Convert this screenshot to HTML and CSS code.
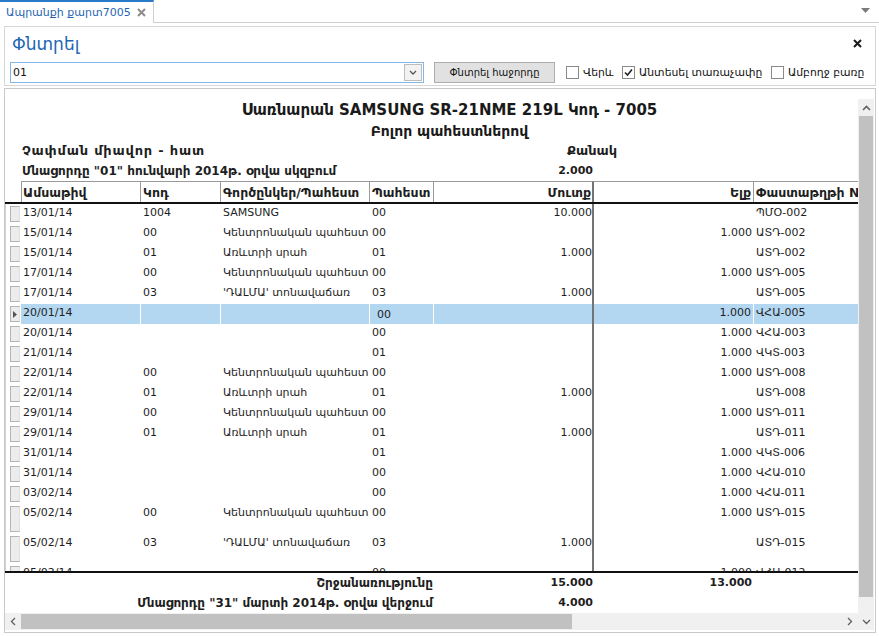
FILE: index.html
```html
<!DOCTYPE html>
<html lang="hy">
<head>
<meta charset="utf-8">
<title>Ապրանքի քարտ7005</title>
<link rel="stylesheet" href="styles.css">
</head>
<body>
<div class="app">
  <div class="tabstrip">
    <div class="tab">
      <span class="tab-title">Ապրանքի քարտ7005</span>
      <svg class="tab-close" width="9" height="9" viewBox="0 0 9 9"><path d="M1 1L8 8M8 1L1 8" stroke="#8c8c8c" stroke-width="2"/></svg>
    </div>
    <div class="tab-fill">
      <svg width="9" height="6" viewBox="0 0 9 6"><path d="M0 0H9L4.5 5Z" fill="#7a7a7a"/></svg>
    </div>
  </div>

  <div class="find">
    <div class="find-head">
      <span class="find-title">Փնտրել</span>
      <svg width="9" height="9" viewBox="0 0 9 9"><path d="M1 1L8 8M8 1L1 8" stroke="#1a1a1a" stroke-width="2"/></svg>
    </div>
    <div class="find-row">
      <div class="combo">
        <span class="combo-text">01</span>
        <span class="combo-btn"><svg width="8" height="5" viewBox="0 0 8 5"><path d="M1 1L4 4L7 1" fill="none" stroke="#555" stroke-width="1.3"/></svg></span>
      </div>
      <div class="btn">Փնտրել հաջորդը</div>
      <div class="chk chk1"><span class="box"></span><span>Վերև</span></div>
      <div class="chk chk2"><span class="box"><svg width="11" height="11" viewBox="0 0 11 11"><path d="M2 5.5L4.5 8L9 2.5" fill="none" stroke="#222" stroke-width="1.6"/></svg></span><span>Անտեսել տառաչափը</span></div>
      <div class="chk"><span class="box"></span><span>Ամբողջ բառը</span></div>
    </div>
  </div>

  <div class="report">
    <div class="main">
      <div class="sheet">
        <div class="t1">Սառնարան SAMSUNG SR-21NME 219L Կոդ - 7005</div>
        <div class="t2">Բոլոր պահեստներով</div>
        <div class="info cols">
          <div class="lbl big">Չափման միավոր - հատ</div>
          <div class="qty">Քանակ</div>
        </div>
        <div class="info cols">
          <div class="lbl">Մնացորդը "01" հունվարի 2014թ. օրվա սկզբում</div>
          <div class="inum">2.000</div>
        </div>
        <div class="head cols">
          <div class="hrh"></div>
          <div class="h first">Ամսաթիվ</div>
          <div class="h">Կոդ</div>
          <div class="h">Գործընկեր/Պահեստ</div>
          <div class="h">Պահեստ</div>
          <div class="h num in">Մուտք</div>
          <div class="h num">Ելք</div>
          <div class="h">Փաստաթղթի N</div>
        </div>
        <div class="body">
          <div class="row cols"><div class="rh"><span class="rb"></span></div><div class="c">13/01/14</div><div class="c">1004</div><div class="c">SAMSUNG</div><div class="c">00</div><div class="c num in">10.000</div><div class="c num"></div><div class="c doc">ՊՄՕ-002</div></div>
          <div class="row cols"><div class="rh"><span class="rb"></span></div><div class="c">15/01/14</div><div class="c">00</div><div class="c">Կենտրոնական պահեստ</div><div class="c">00</div><div class="c num in"></div><div class="c num">1.000</div><div class="c doc">ԱՏԴ-002</div></div>
          <div class="row cols"><div class="rh"><span class="rb"></span></div><div class="c">15/01/14</div><div class="c">01</div><div class="c">Առևտրի սրահ</div><div class="c">01</div><div class="c num in">1.000</div><div class="c num"></div><div class="c doc">ԱՏԴ-002</div></div>
          <div class="row cols"><div class="rh"><span class="rb"></span></div><div class="c">17/01/14</div><div class="c">00</div><div class="c">Կենտրոնական պահեստ</div><div class="c">00</div><div class="c num in"></div><div class="c num">1.000</div><div class="c doc">ԱՏԴ-005</div></div>
          <div class="row cols"><div class="rh"><span class="rb"></span></div><div class="c">17/01/14</div><div class="c">03</div><div class="c">'ԴԱԼՄԱ' տոնավաճառ</div><div class="c">03</div><div class="c num in">1.000</div><div class="c num"></div><div class="c doc">ԱՏԴ-005</div></div>
          <div class="row cols sel"><div class="rh"><span class="rb"><svg width="5" height="7" viewBox="0 0 5 7"><path d="M0 0L4 3.5L0 7Z" fill="#555"/></svg></span></div><div class="c">20/01/14</div><div class="c"></div><div class="c"></div><div class="c edit">00</div><div class="c num in"></div><div class="c num">1.000</div><div class="c doc">ՎՀԱ-005</div></div>
          <div class="row cols"><div class="rh"><span class="rb"></span></div><div class="c">20/01/14</div><div class="c"></div><div class="c"></div><div class="c">00</div><div class="c num in"></div><div class="c num">1.000</div><div class="c doc">ՎՀԱ-003</div></div>
          <div class="row cols"><div class="rh"><span class="rb"></span></div><div class="c">21/01/14</div><div class="c"></div><div class="c"></div><div class="c">01</div><div class="c num in"></div><div class="c num">1.000</div><div class="c doc">ՎԿՏ-003</div></div>
          <div class="row cols"><div class="rh"><span class="rb"></span></div><div class="c">22/01/14</div><div class="c">00</div><div class="c">Կենտրոնական պահեստ</div><div class="c">00</div><div class="c num in"></div><div class="c num">1.000</div><div class="c doc">ԱՏԴ-008</div></div>
          <div class="row cols"><div class="rh"><span class="rb"></span></div><div class="c">22/01/14</div><div class="c">01</div><div class="c">Առևտրի սրահ</div><div class="c">01</div><div class="c num in">1.000</div><div class="c num"></div><div class="c doc">ԱՏԴ-008</div></div>
          <div class="row cols"><div class="rh"><span class="rb"></span></div><div class="c">29/01/14</div><div class="c">00</div><div class="c">Կենտրոնական պահեստ</div><div class="c">00</div><div class="c num in"></div><div class="c num">1.000</div><div class="c doc">ԱՏԴ-011</div></div>
          <div class="row cols"><div class="rh"><span class="rb"></span></div><div class="c">29/01/14</div><div class="c">01</div><div class="c">Առևտրի սրահ</div><div class="c">01</div><div class="c num in">1.000</div><div class="c num"></div><div class="c doc">ԱՏԴ-011</div></div>
          <div class="row cols"><div class="rh"><span class="rb"></span></div><div class="c">31/01/14</div><div class="c"></div><div class="c"></div><div class="c">01</div><div class="c num in"></div><div class="c num">1.000</div><div class="c doc">ՎԿՏ-006</div></div>
          <div class="row cols"><div class="rh"><span class="rb"></span></div><div class="c">31/01/14</div><div class="c"></div><div class="c"></div><div class="c">00</div><div class="c num in"></div><div class="c num">1.000</div><div class="c doc">ՎՀԱ-010</div></div>
          <div class="row cols"><div class="rh"><span class="rb"></span></div><div class="c">03/02/14</div><div class="c"></div><div class="c"></div><div class="c">00</div><div class="c num in"></div><div class="c num">1.000</div><div class="c doc">ՎՀԱ-011</div></div>
          <div class="row tall cols"><div class="rh"><span class="rb"></span></div><div class="c">05/02/14</div><div class="c">00</div><div class="c">Կենտրոնական պահեստ</div><div class="c">00</div><div class="c num in"></div><div class="c num">1.000</div><div class="c doc">ԱՏԴ-015</div></div>
          <div class="row tall cols"><div class="rh"><span class="rb"></span></div><div class="c">05/02/14</div><div class="c">03</div><div class="c">'ԴԱԼՄԱ' տոնավաճառ</div><div class="c">03</div><div class="c num in">1.000</div><div class="c num"></div><div class="c doc">ԱՏԴ-015</div></div>
          <div class="row cols"><div class="rh"><span class="rb"></span></div><div class="c">05/02/14</div><div class="c"></div><div class="c"></div><div class="c">00</div><div class="c num in"></div><div class="c num">1.000</div><div class="c doc">ՎՀԱ-012</div></div>
        </div>
        <div class="foot">
          <div class="frow cols">
            <div class="flbl">Շրջանառությունը</div>
            <div class="fin">15.000</div>
            <div class="fout">13.000</div>
          </div>
          <div class="frow cols">
            <div class="flbl">Մնացորդը "31" մարտի 2014թ. օրվա վերջում</div>
            <div class="fin">4.000</div>
          </div>
        </div>
      </div>
    </div>

    <div class="vscroll">
      <div class="sbtn"><svg width="9" height="6" viewBox="0 0 9 6"><path d="M1 5L4.5 1.5L8 5" fill="none" stroke="#606060" stroke-width="1.6"/></svg></div>
      <div class="vtrack"><div class="vthumb"></div></div>
      <div class="sbtn"><svg width="9" height="6" viewBox="0 0 9 6"><path d="M1 1L4.5 4.5L8 1" fill="none" stroke="#606060" stroke-width="1.3"/></svg></div>
    </div>

    <div class="hscroll">
      <div class="hbtn"><svg width="6" height="9" viewBox="0 0 6 9"><path d="M5 1L1.5 4.5L5 8" fill="none" stroke="#606060" stroke-width="1.3"/></svg></div>
      <div class="htrack"><div class="hthumb"></div></div>
      <div class="hbtn"><svg width="6" height="9" viewBox="0 0 6 9"><path d="M1 1L4.5 4.5L1 8" fill="none" stroke="#606060" stroke-width="1.3"/></svg></div>
    </div>
  </div>
</div>
</body>
</html>
```

FILE: styles.css
```css
* { box-sizing: border-box; }
html, body { margin: 0; padding: 0; }
body {
  width: 879px;
  height: 636px;
  overflow: hidden;
  background: #fff;
  font-family: "DejaVu Sans", "Liberation Sans", sans-serif;
  color: #1e1e1e;
}
.app { display: flex; flex-direction: column; height: 636px; }

/* tab strip */
.tabstrip { display: flex; height: 23px; }
.tab {
  width: 154px;
  display: flex;
  align-items: center;
  justify-content: space-between;
  padding: 0 7px 0 6px;
  border-top: 2px solid #2b79c9;
  border-right: 1px solid #cfcfcf;
}
.tab-title { font-size: 11px; color: #1f65b1; }
.tab-close { margin-top: 1px; }
.tab-fill {
  flex: 1;
  display: flex;
  justify-content: flex-end;
  align-items: center;
  padding-right: 9px;
  border-bottom: 1px solid #cfcfcf;
}

/* find panel */
.find {
  margin: 3px 3px 0 4px;
  height: 61px;
  border: 1px solid #d6d6d6;
  padding: 0 13px 0 5px;
  display: flex;
  flex-direction: column;
}
.find-head {
  height: 34px;
  display: flex;
  align-items: center;
  justify-content: space-between;
  padding-left: 2px;
}
.find-title { font-size: 17px; color: #1d67b4; }
.find-row { display: flex; align-items: flex-start; padding-top: 1px; }
.combo {
  flex: none;
  width: 414px;
  height: 21px;
  border: 1px solid #85b7e6;
  display: flex;
  align-items: center;
  justify-content: space-between;
  padding: 0 1px 0 2px;
}
.combo-text { font-size: 11px; color: #111; }
.combo-btn {
  width: 18px;
  height: 17px;
  border: 1px solid #bdbdbd;
  background: #f2f2f2;
  display: flex;
  align-items: center;
  justify-content: center;
}
.btn {
  flex: none;
  margin-left: 10px;
  width: 121px;
  height: 21px;
  background: #e1e1e1;
  border: 1px solid #adadad;
  font-size: 10px;
  display: flex;
  align-items: center;
  justify-content: center;
  color: #111;
}
.chk {
  flex: none;
  display: flex;
  align-items: center;
  gap: 4px;
  height: 21px;
  font-size: 10.8px;
  color: #111;
  white-space: nowrap;
}
.chk1 { margin-left: 11px; width: 56px; }
.chk2 { width: 149px; }
.box {
  flex: none;
  width: 13px;
  height: 13px;
  border: 1px solid #8a8a8a;
  background: #fff;
  display: flex;
  align-items: center;
  justify-content: center;
}

/* report frame */
.report {
  margin: 2px 3px 3px 4px;
  flex: 1;
  border: 1px solid #c9c9c9;
  padding: 10px 1px 2px 0;
  display: grid;
  grid-template-columns: 1fr 16px;
  grid-template-rows: 1fr 17px;
}
.main { overflow: hidden; }
.sheet { width: 889px; display: flex; flex-direction: column; }
.cols {
  display: grid;
  grid-template-columns: 16px 120px 80px 149px 64px 160px 160px 140px;
}
.t1 {
  height: 22px;
  line-height: 22px;
  text-align: center;
  font-weight: bold;
  font-size: 15px;
  color: #1a1a1a;
}
.t2 {
  height: 20px;
  line-height: 20px;
  text-align: center;
  font-weight: bold;
  font-size: 14px;
  color: #1a1a1a;
}
.info { height: 20px; line-height: 20px; font-weight: bold; font-size: 11px; color: #1e1e1e; }
.lbl { grid-column: 2 / 6; padding-left: 1px; white-space: nowrap; font-size: 12px; }
.lbl.big { font-size: 13px; letter-spacing: 0.8px; }
.qty { grid-column: 6 / 8; text-align: left; padding-left: 133px; font-size: 13px; white-space: nowrap; }
.inum { grid-column: 6 / 7; text-align: right; padding-right: 1px; }

/* header */
.head {
  border-bottom: 2px solid #111;
  height: 23px;
}
.h {
  border-top: 1px solid #9a9a9a;
  border-right: 1px solid #9a9a9a;
  font-weight: bold;
  font-size: 12.5px;
  line-height: 21px;
  padding: 0 2px;
  white-space: nowrap;
  overflow: hidden;
  color: #1e1e1e;
}
.h.first { border-left: 1px solid #9a9a9a; padding-left: 1px; }
.h.num { text-align: right; }
.h.in { border-right: 2px solid #747474; padding-right: 1px; }

/* body */
.body { height: 367px; overflow: hidden; }
.row { height: 20px; }
.row.tall { height: 30px; }
.rh { display: flex; padding: 2px 1px 2px 4px; border-left: 1px solid #d0d0d0; }
.rb {
  flex: 1;
  background: #ececec;
  border: 1px solid #b4b4b4;
  border-right-color: #e0e0e0;
  display: flex;
  align-items: center;
  justify-content: center;
}
.c {
  font-size: 11px;
  line-height: 14px;
  padding: 2px 2px 0;
  white-space: nowrap;
  overflow: hidden;
  color: #1e1e1e;
}
.c.num { text-align: right; }
.c.in { border-right: 2px solid #747474; padding-right: 0; }
.c.doc { padding-left: 2px; }
.sel .c { background: #b3d6f1; border-right: 1px solid #fff; }
.sel .c.in { border-right: 2px solid #747474; }
.sel .c.doc { border-right: none; }
.sel .c.edit { padding: 4px 0 0 7px; }

/* footer */
.foot { border-top: 2px solid #111; }
.frow { height: 20px; line-height: 20px; font-weight: bold; font-size: 11px; color: #1e1e1e; }
.flbl { grid-column: 2 / 6; text-align: right; padding-right: 1px; white-space: nowrap; font-size: 12px; }
.fin { grid-column: 6 / 7; text-align: right; padding-right: 1px; }
.fout { grid-column: 7 / 8; text-align: right; padding-right: 2px; }

/* scrollbars */
.vscroll {
  grid-column: 2;
  grid-row: 1 / 3;
  background: #f0f0f0;
  display: flex;
  flex-direction: column;
}
.sbtn { height: 17px; display: flex; align-items: center; justify-content: center; }
.vtrack { flex: 1; padding: 0 1px 16px 1px; display: flex; flex-direction: column; }
.vthumb { flex: 1; background: #c1c1c1; }
.hscroll {
  grid-column: 1;
  grid-row: 2;
  background: #f0f0f0;
  display: flex;
}
.hbtn { width: 16px; display: flex; align-items: center; justify-content: center; }
.htrack { flex: 1; padding: 1px 0; }
.hthumb { width: 551px; height: 100%; background: #c1c1c1; }
```
